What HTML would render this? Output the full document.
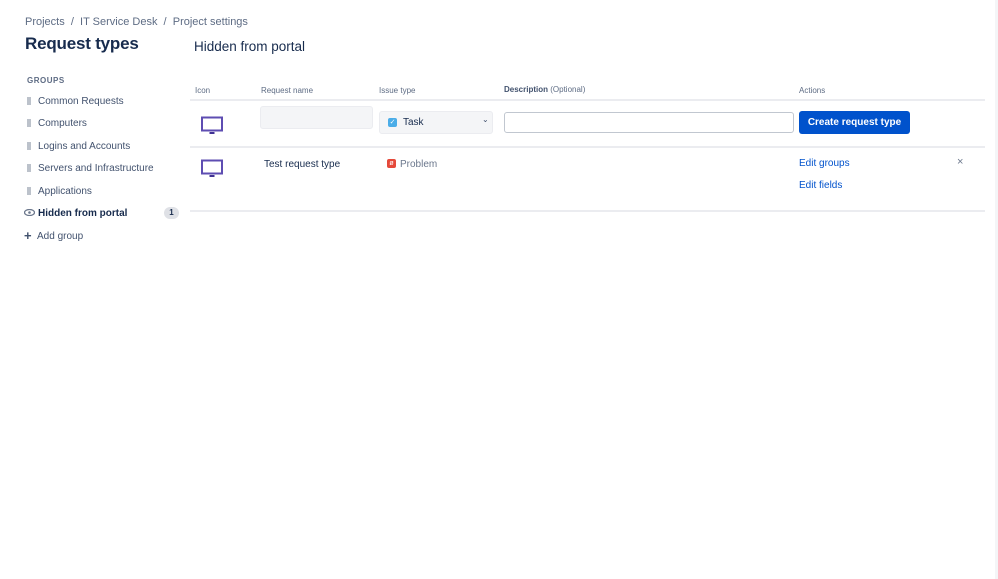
<!DOCTYPE html>
<html><head><meta charset="utf-8"><style>
*{box-sizing:border-box;margin:0;padding:0}
body{width:998px;height:579px;background:#fff;font-family:"Liberation Sans",sans-serif;color:#172b4d;position:relative;overflow:hidden}
.a{position:absolute;white-space:nowrap}
.bc{font-size:11px;color:#5e6c84;top:16px;left:25px}
.grp{font-size:10px;color:#42526e;left:38px}
.h{width:4px;height:8px;left:27px;background-image:radial-gradient(circle,#a5adba 0.8px,transparent 0.9px);background-size:2px 2px}
.th{font-size:8px;color:#5e6c84;top:86px}
.line{position:absolute;left:190px;width:795px;height:2px;background:#ebecf0}
.mon{position:absolute;width:22px;height:20px}
a{color:#0052cc;text-decoration:none}
</style></head><body>
<div style="position:absolute;right:0;top:0;width:3px;height:579px;background:#f4f5f7"></div>
<div class="a bc">Projects &nbsp;/&nbsp; IT Service Desk &nbsp;/&nbsp; Project settings</div>
<div class="a" style="left:25px;top:34px;font-size:17px;font-weight:bold;letter-spacing:-0.2px">Request types</div>
<div class="a" style="left:194px;top:39px;font-size:13.5px">Hidden from portal</div>
<div class="a" style="left:27px;top:76px;font-size:8px;font-weight:bold;color:#5e6c84;letter-spacing:0.5px">GROUPS</div>
<div class="a h" style="top:97px"></div><div class="a grp" style="top:96px">Common Requests</div>
<div class="a h" style="top:119px"></div><div class="a grp" style="top:118px">Computers</div>
<div class="a h" style="top:142px"></div><div class="a grp" style="top:141px">Logins and Accounts</div>
<div class="a h" style="top:164px"></div><div class="a grp" style="top:163px">Servers and Infrastructure</div>
<div class="a h" style="top:187px"></div><div class="a grp" style="top:186px">Applications</div>
<svg class="a" style="left:24px;top:209px" width="11" height="7" viewBox="0 0 11 7"><ellipse cx="5.5" cy="3.5" rx="5" ry="3" fill="none" stroke="#6b778c" stroke-width="1.3"/><circle cx="5.5" cy="3.5" r="1.3" fill="#6b778c"/></svg>
<div class="a grp" style="top:208px;font-weight:bold;color:#172b4d">Hidden from portal</div>
<div class="a" style="left:164px;top:207px;width:15px;height:12px;border-radius:6px;background:#dfe1e6;font-size:8px;font-weight:bold;text-align:center;line-height:12px">1</div>
<div class="a" style="left:24px;top:228px;font-size:13px;color:#42526e;font-weight:bold">+</div>
<div class="a grp" style="top:231px;left:37px">Add group</div>

<div class="a th" style="left:195px">Icon</div>
<div class="a th" style="left:261px">Request name</div>
<div class="a th" style="left:379px">Issue type</div>
<div class="a th" style="left:504px;top:85px"><b style="color:#42526e">Description</b> (Optional)</div>
<div class="a th" style="left:799px">Actions</div>
<div class="line" style="top:99px"></div>
<div class="line" style="top:146px"></div>
<div class="line" style="top:210px"></div>

<svg class="mon" style="left:201px;top:116px" viewBox="0 0 22 20"><rect x="1" y="1.5" width="20" height="13" fill="none" stroke="#5e4db2" stroke-width="2"/><rect x="8.5" y="16" width="5" height="2" fill="#403294"/></svg>
<svg class="mon" style="left:201px;top:159px" viewBox="0 0 22 20"><rect x="1" y="1.5" width="20" height="13" fill="none" stroke="#5e4db2" stroke-width="2"/><rect x="8.5" y="16" width="5" height="2" fill="#403294"/></svg>

<div class="a" style="left:260px;top:106px;width:113px;height:23px;background:#f4f5f7;border:1px solid #ebecf0;border-radius:3px"></div>
<div class="a" style="left:379px;top:111px;width:114px;height:23px;background:#f4f5f7;border:1px solid #ebecf0;border-radius:3px"></div>
<div class="a" style="left:388px;top:118px;width:9px;height:9px;background:#4bade8;border-radius:2px;color:#fff;font-size:7px;line-height:9px;text-align:center">✓</div>
<div class="a" style="left:403px;top:117px;font-size:10px">Task</div>
<div class="a" style="left:482px;top:115px;font-size:8px;color:#42526e">⌄</div>
<div class="a" style="left:504px;top:112px;width:290px;height:21px;border:1px solid #c1c7d0;border-radius:3px"></div>
<div class="a" style="left:799px;top:111px;width:111px;height:23px;background:#0052cc;border-radius:3px;color:#fff;font-size:10px;font-weight:bold;text-align:center;line-height:24px">Create request type</div>

<div class="a" style="left:264px;top:159px;font-size:10px;color:#172b4d">Test request type</div>
<div class="a" style="left:387px;top:159px;width:9px;height:9px;background:#e5493a;border-radius:2px;color:#fff;font-size:7px;line-height:9px;text-align:center">ø</div>
<div class="a" style="left:400px;top:159px;font-size:10px;color:#6b778c">Problem</div>
<div class="a" style="left:799px;top:158px;font-size:10px"><a>Edit groups</a></div>
<div class="a" style="left:799px;top:180px;font-size:10px"><a>Edit fields</a></div>
<div class="a" style="left:957px;top:156px;font-size:11px;color:#6b778c">×</div>
</body></html>
